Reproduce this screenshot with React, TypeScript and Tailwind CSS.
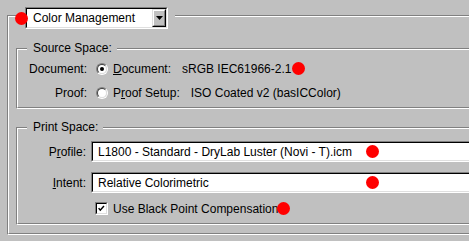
import React from 'react'

type GroupProps = {
  className?: string
  innerClassName?: string
  legend?: React.ReactNode
  children?: React.ReactNode
}

// etched win-classic group box: gray line, white line under it
const Group = ({ className, innerClassName, legend, children }: GroupProps) => (
  <div className={`relative border border-t-[#808080] border-l-[#808080] border-r-white border-b-white ${className ?? ''}`}>
    <div className={`h-full border border-t-white border-l-white border-r-[#808080] border-b-[#808080] ${innerClassName ?? ''}`}>
      {children}
    </div>
    {legend}
  </div>
)

const Sunken = ({ className, children }: { className?: string; children?: React.ReactNode }) => (
  <div className={`border border-t-[#808080] border-l-[#808080] border-r-white border-b-white ${className ?? ''}`}>
    <div className="h-full w-full border border-t-black border-l-black border-r-[#dfdfdf] border-b-[#dfdfdf] bg-white flex items-center">
      {children}
    </div>
  </div>
)

const Radio = ({ checked }: { checked?: boolean }) => (
  <div className="w-[12px] h-[12px] rounded-full border border-t-[#808080] border-l-[#808080] border-r-white border-b-white">
    <div className="w-full h-full rounded-full border border-t-[#404040] border-l-[#404040] border-r-[#dfdfdf] border-b-[#dfdfdf] bg-white flex items-center justify-center">
      {checked && <div className="w-[4px] h-[4px] rounded-full bg-black" />}
    </div>
  </div>
)

const Dot = ({ className }: { className: string }) => (
  <div className={`absolute w-[13px] h-[13px] rounded-full bg-[#ff0000] ${className}`} />
)

export default function App() {
  return (
    <div className="relative w-[469px] h-[241px] overflow-hidden bg-[#c0c0c0] text-black text-[12px] leading-[14px] font-['Liberation_Sans',Arial,sans-serif]">
      <div className="pl-[7px] pt-[15px]">
        <Group
          className="w-[540px] h-[220px]"
          innerClassName="pl-[7px] pt-[31px]"
          legend={
            <div className="absolute left-[14px] top-[-9px] pl-[3px] pr-[7px] bg-[#c0c0c0]">
              <div className="w-[143px] h-[22px] border border-t-[#808080] border-l-[#808080] border-r-white border-b-white">
                <div className="h-full border border-t-black border-l-black border-r-[#dfdfdf] border-b-[#dfdfdf] bg-white flex">
                  <span className="flex-1 pl-[6px] flex items-center">Color Management</span>
                  <div className="w-[14px] h-full border border-t-[#dfdfdf] border-l-[#dfdfdf] border-r-black border-b-black">
                    <div className="h-full border border-t-white border-l-white border-r-[#808080] border-b-[#808080] bg-[#c0c0c0] flex items-center justify-center">
                      <svg width="7" height="4" viewBox="0 0 7 4">
                        <polygon points="0,0 7,0 3.5,4" fill="#000" />
                      </svg>
                    </div>
                  </div>
                </div>
              </div>
            </div>
          }
        >
          {/* source space */}
          <Group
            className="w-[520px] h-[61px]"
            innerClassName="pt-[7px]"
            legend={<span className="absolute left-[10px] top-[-8px] pl-[6px] pr-[5px] bg-[#c0c0c0]">Source Space:</span>}
          >
            <div className="h-[24px] flex items-center">
              <span className="w-[69px] text-right">Document:</span>
              <div className="ml-[9px]"><Radio checked /></div>
              <span className="ml-[5px]"><u>D</u>ocument:</span>
              <span className="ml-[11px]">sRGB IEC61966-2.1</span>
            </div>
            <div className="h-[24px] flex items-center">
              <span className="w-[69px] text-right">Proof:</span>
              <div className="ml-[9px]"><Radio /></div>
              <span className="ml-[5px]">P<u>r</u>oof Setup:</span>
              <span className="ml-[11px]">ISO Coated v2 (basICColor)</span>
            </div>
          </Group>

          {/* print space */}
          <Group
            className="w-[520px] h-[98px] mt-[18px]"
            innerClassName="pt-[12px]"
            legend={<span className="absolute left-[10px] top-[-8px] pl-[6px] pr-[5px] bg-[#c0c0c0]">Print Space:</span>}
          >
            <div className="h-[21px] flex items-center">
              <span className="w-[68px] text-right">P<u>r</u>ofile:</span>
              <Sunken className="ml-[5px] w-[420px] h-[21px]">
                <span className="pl-[5px] whitespace-nowrap">L1800 - Standard - DryLab Luster (Novi - T).icm</span>
              </Sunken>
            </div>
            <div className="h-[21px] mt-[10px] flex items-center">
              <span className="w-[68px] text-right"><u>I</u>ntent:</span>
              <Sunken className="ml-[5px] w-[420px] h-[21px]">
                <span className="pl-[5px]">Relative Colorimetric</span>
              </Sunken>
            </div>
            <div className="h-[13px] mt-[9px] flex items-center">
              <Sunken className="ml-[77px] w-[13px] h-[13px]">
                <svg width="11" height="11" viewBox="0 0 11 11" className="block">
                  <polyline points="2,5 4,7.5 8.5,2.5" fill="none" stroke="#000" strokeWidth="1.8" />
                </svg>
              </Sunken>
              <span className="ml-[5px]">Use Black Point Compensation</span>
            </div>
          </Group>
        </Group>
      </div>

      <Dot className="left-[15px] top-[12px]" />
      <Dot className="left-[292px] top-[62px]" />
      <Dot className="left-[366px] top-[145px]" />
      <Dot className="left-[366px] top-[176px]" />
      <Dot className="left-[277px] top-[202px]" />
    </div>
  )
}
